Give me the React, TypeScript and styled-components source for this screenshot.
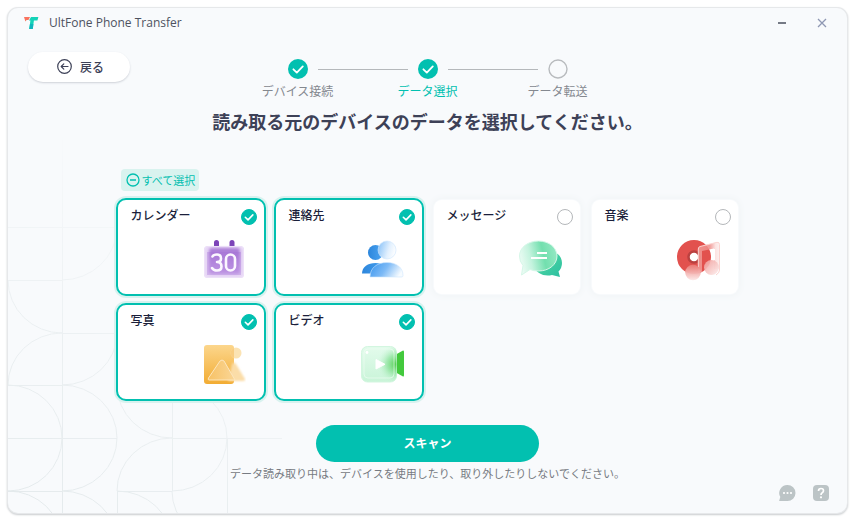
import React, { useState } from "react";
import styled, { createGlobalStyle } from "styled-components";

const teal = "#02c0b0";
const ink = "#3d4157";
const muted = "#84888f";

const GlobalStyle = createGlobalStyle`
  * { box-sizing: border-box; }
  body {
    margin: 0;
    background: #fff;
    color: ${ink};
    font-family: "Noto Sans CJK JP", "Noto Sans", sans-serif;
    font-size: 12px;
  }
  button { font: inherit; color: inherit; border: 0; background: none; padding: 0; cursor: pointer; }
  svg { display: block; }
`;

const Page = styled.div`
  padding: 8px 8px 7px;
`;

const Window = styled.div`
  position: relative;
  display: flex;
  flex-direction: column;
  min-height: calc(100vh - 15px);
  border-radius: 10px;
  background: #f8fafc;
  box-shadow: 0 0 0 1px #e6e8ea, 0 1px 2px 1px #c9cccf;
  overflow: hidden;
`;

const Backdrop = styled.svg`
  position: absolute;
  left: 0;
  bottom: 0;
  pointer-events: none;
`;

const TitleBar = styled.header`
  position: relative;
  display: flex;
  align-items: center;
  height: 30px;
  padding: 0 19px 0 16px;
`;

const AppName = styled.span`
  margin-left: 10px;
  flex: 1;
  font-family: "Open Sans", "Noto Sans", sans-serif;
  font-size: 12px;
  line-height: 16px;
  color: #4d5260;
`;

const WindowControls = styled.div`
  display: flex;
  gap: 28px;
`;

const Main = styled.main`
  position: relative;
  display: flex;
  flex-direction: column;
  align-items: center;
  padding: 14px 20px 0;
`;

const TopRow = styled.div`
  display: grid;
  grid-template-columns: 1fr auto 1fr;
  align-items: start;
  width: 100%;
`;

const BackButton = styled.button`
  display: flex;
  align-items: center;
  justify-self: start;
  gap: 8px;
  width: 102px;
  height: 30px;
  padding: 0 0 2px 29px;
  border-radius: 15px;
  background: #fff;
  box-shadow: 0 1px 2px rgba(60, 70, 90, 0.22);
  font-weight: 500;
`;

const Steps = styled.ol`
  display: flex;
  margin: 7px 0 0;
  padding: 0;
  list-style: none;
`;

const StepItem = styled.li<{ $current?: boolean }>`
  width: 130px;
  font-size: 12px;
  line-height: 16px;
  text-align: center;
  color: ${(p) => (p.$current ? teal : muted)};
`;

const StepTrack = styled.div`
  display: flex;
  align-items: center;
  gap: 10px;
  margin-bottom: 4px;
`;

const Connector = styled.span<{ $hidden?: boolean }>`
  flex: 1;
  height: 1px;
  background: ${(p) => (p.$hidden ? "transparent" : "#b5b8bb")};
`;

const Heading = styled.h1`
  margin: 9px 0 0;
  font-size: 18px;
  line-height: 26px;
  font-weight: 700;
  color: ${ink};
`;

const Picker = styled.section`
  width: 100%;
  max-width: 624px;
  margin-top: 35px;
`;

const SelectAll = styled.button`
  display: flex;
  align-items: center;
  gap: 2px;
  height: 22px;
  margin: 0 0 7px 5px;
  padding: 0 4px 0 5px;
  border-radius: 4px;
  background: #d9f3ef;
  color: ${teal};
  font-size: 11px;
`;

const CardGrid = styled.div`
  display: grid;
  grid-template-columns: repeat(4, minmax(0, 1fr));
  gap: 7px 8px;
`;

const Card = styled.label<{ $selected: boolean }>`
  display: flex;
  flex-direction: column;
  justify-content: space-between;
  height: 98px;
  padding: 9px 7px 11px 13px;
  border: 2px solid ${(p) => (p.$selected ? teal : "transparent")};
  border-radius: 10px;
  background: #fff;
  background-clip: ${(p) => (p.$selected ? "border-box" : "padding-box")};
  box-shadow: ${(p) => (p.$selected ? "0 0 0 2px #d8f2ef" : "0 0 6px #f0f4f6")};
  cursor: pointer;
`;

const CardTop = styled.div`
  display: flex;
  justify-content: space-between;
  align-items: flex-start;
`;

const CardTitle = styled.span`
  font-size: 12px;
  line-height: 12px;
  font-weight: 500;
  color: #1b1f3b;
`;

const CardArt = styled.svg`
  align-self: flex-end;
  margin-right: 11px;
`;

const CheckStack = styled.span`
  display: grid;
  place-items: center;
  > * { grid-area: 1 / 1; }
`;

const CheckInput = styled.input`
  appearance: none;
  width: 16px;
  height: 16px;
  margin: 0;
  border: 1px solid #b4b7ba;
  border-radius: 50%;
  background: #fff;
  cursor: pointer;
  &:checked { border-color: ${teal}; background: ${teal}; }
`;

const CheckMark = styled.svg`
  pointer-events: none;
`;

const ScanButton = styled.button`
  width: 223px;
  height: 37px;
  margin-top: 24px;
  padding-bottom: 2px;
  border-radius: 19px;
  background: ${teal};
  color: #fff;
  font-size: 12px;
  font-weight: 700;
`;

const Notice = styled.p`
  margin: 2px 0 0;
  font-size: 11px;
  line-height: 18px;
  color: #777b82;
`;

const Tools = styled.footer`
  position: relative;
  display: flex;
  justify-content: flex-end;
  gap: 16px;
  margin-top: auto;
  padding: 0 17px 11px;
`;

const Logo = () => (
  <svg width="15" height="14" viewBox="0 0 15 14" aria-hidden="true">
    <path d="M0 1h6L4.500 4H2.600L1.400 5.400Z" fill="#f8735f" />
    <path d="M7 1h7.400l-1 3.400H9.900L8.800 13H5.200L6.400 4.400H5Z" fill="#14d3b8" />
    <path d="M6 8h3.400l-.7 5H5.200Z" fill="#0fb6bd" />
  </svg>
);

const Tick = ({ size }: { size: number }) => (
  <CheckMark width={size} height={size} viewBox="0 0 20 20" fill="none" aria-hidden="true">
    <path d="M5.400 10.300 8.800 13.600 14.800 7.400" stroke="#fff" strokeWidth="2" strokeLinecap="round" strokeLinejoin="round" />
  </CheckMark>
);

const StepDot = ({ done }: { done: boolean }) => (
  <svg width="20" height="20" viewBox="0 0 20 20" fill="none" aria-hidden="true">
    {done ? (
      <>
        <circle cx="10" cy="10" r="10" fill={teal} />
        <path d="M5.400 10.300 8.800 13.600 14.800 7.400" stroke="#fff" strokeWidth="1.800" strokeLinecap="round" strokeLinejoin="round" />
      </>
    ) : (
      <circle cx="10" cy="10" r="9" stroke="#b8bbbe" strokeWidth="1.400" />
    )}
  </svg>
);

const CalendarArt = () => (
  <>
    <defs>
      <linearGradient id="calBody" x1="0" y1="0" x2="0" y2="1">
        <stop offset="0" stopColor="#a878d6" />
        <stop offset="1" stopColor="#ccaaeb" />
      </linearGradient>
      <filter id="calSoft" x="-20%" y="-20%" width="140%" height="140%"><feGaussianBlur stdDeviation="1.8" /></filter>
    </defs>
    <rect x="12" y="1" width="5" height="10" rx="2.500" fill="#7c43b8" />
    <rect x="27.500" y="1" width="5" height="10" rx="2.500" fill="#7c43b8" />
    <rect x="2" y="7" width="40" height="32" rx="3.500" fill="#e8d8f6" />
    <rect x="7" y="9" width="31" height="26" rx="3" fill="url(#calBody)" filter="url(#calSoft)" />
    <rect x="5" y="13" width="34" height="23" fill="#9a62cf" opacity=".3" />
    <rect x="2.500" y="7.500" width="39" height="31" rx="3.500" fill="none" stroke="#f0e5fa" opacity=".7" />
    <g stroke="#fbf7ff" strokeWidth="2.600" fill="none" strokeLinecap="round" strokeLinejoin="round">
      <path d="M10.500 17.500Q11.500 15.500 15 15.500Q19 15.500 19 19.500Q19 23 15 23Q19.500 23 19.500 27.500Q19.500 31.500 15 31.500Q11.500 31.500 10 29" />
      <rect x="24" y="15.500" width="9" height="16" rx="4.500" />
    </g>
  </>
);

const ContactsArt = () => (
  <>
    <defs>
      <linearGradient id="conBack" x1="0" y1="0" x2="1" y2="0">
        <stop offset="0" stopColor="#2c86dc" />
        <stop offset="1" stopColor="#4da5f2" />
      </linearGradient>
      <linearGradient id="conHead" x1="0" y1=".3" x2="1" y2=".6">
        <stop offset="0" stopColor="#8fc5f8" />
        <stop offset=".6" stopColor="#e2f0fe" />
        <stop offset="1" stopColor="#fff" />
      </linearGradient>
      <linearGradient id="conBody" x1="0" y1=".2" x2="1" y2=".5">
        <stop offset="0" stopColor="#3f98ee" />
        <stop offset=".5" stopColor="#7dbaf6" />
        <stop offset="1" stopColor="#f6fbff" />
      </linearGradient>
    </defs>
    <circle cx="15.500" cy="13.500" r="7.500" fill="url(#conBack)" />
    <path d="M2 34.500C2 28 8 24 15.500 24S28 28 28 34.500Z" fill="url(#conBack)" />
    <circle cx="27" cy="11" r="9" fill="url(#conHead)" stroke="#cfe6fd" strokeWidth=".6" />
    <path d="M10 38C10 29 17 23.500 27 23.500S43 29 43 36.500Q43 38 41.500 38Z" fill="url(#conBody)" stroke="#cfe6fd" strokeWidth=".6" />
  </>
);

const MessageArt = () => (
  <>
    <defs>
      <linearGradient id="msgBack" x1="0" y1="0" x2="1" y2="1">
        <stop offset="0" stopColor="#54dca0" />
        <stop offset="1" stopColor="#2dbfa2" />
      </linearGradient>
      <linearGradient id="msgFront" x1="0" y1=".6" x2="1" y2=".4">
        <stop offset="0" stopColor="#edfcf5" />
        <stop offset=".3" stopColor="#c4f3de" />
        <stop offset=".65" stopColor="#72dfae" />
        <stop offset="1" stopColor="#93e8c3" />
      </linearGradient>
    </defs>
    <path d="M38 14C42 16 44 20 44 24Q44 29 40.500 32.500L42 38 34 36C26 38 18 34 16 28Z" fill="url(#msgBack)" />
    <path d="M20.500 2C31 2 39 8.500 39 17S31 32 20.500 32Q15.500 32 12 30.500L3.500 36 5 26.500Q1.500 22.500 1.500 17C1.500 8.500 10 2 20.500 2Z" fill="url(#msgFront)" stroke="#d6f7e8" strokeWidth="1" />
    <path d="M19 14h10M13 19h16" stroke="#fff" strokeWidth="2.200" />
  </>
);

const MusicArt = () => (
  <>
    <defs>
      <linearGradient id="musNote" gradientUnits="userSpaceOnUse" x1="21" y1="0" x2="44" y2="0">
        <stop offset="0" stopColor="#f2a09c" />
        <stop offset=".55" stopColor="#ee8b87" />
        <stop offset=".8" stopColor="#fbdedc" />
        <stop offset="1" stopColor="#fdf0ef" />
      </linearGradient>
      <linearGradient id="musDot" x1="0" y1="0" x2="0" y2="1">
        <stop offset="0" stopColor="#ea7a76" />
        <stop offset="1" stopColor="#fce9e8" />
      </linearGradient>
      <linearGradient id="musDotRight" x1="0" y1="0" x2="1" y2="1">
        <stop offset="0" stopColor="#f09a97" />
        <stop offset="1" stopColor="#fdf0ef" />
      </linearGradient>
    </defs>
    <circle cx="18" cy="18" r="11" fill="none" stroke="#e2514e" strokeWidth="12" />
    <circle cx="18" cy="18" r="5.500" fill="none" stroke="#bb4140" strokeWidth="2.500" />
    <path d="M22 33V10Q22 8 24 7.500L41 3.300Q43.500 3 43.500 5.500V30H38V9.500L26 12V33Z" fill="url(#musNote)" opacity=".85" />
    <path d="M22.300 28V10Q22.300 8 24 7.500L41 3.300Q43.500 3 43.500 5.500V31Q43.500 34 40 36" fill="none" stroke="#fbd3d0" strokeWidth="1" />
    <rect x="35.500" y="10" width="3.500" height="11" fill="#fff" />
    <circle cx="17" cy="33.500" r="7.800" fill="url(#musDot)" opacity=".95" />
    <circle cx="35.500" cy="28.500" r="7.500" fill="url(#musDotRight)" opacity=".9" />
  </>
);

const PhotoArt = () => (
  <>
    <defs>
      <linearGradient id="phoBody" x1="0" y1="0" x2="0" y2="1">
        <stop offset="0" stopColor="#fcd68c" />
        <stop offset="1" stopColor="#f2ac33" />
      </linearGradient>
      <linearGradient id="phoHill" x1="0" y1="0" x2="1" y2="0">
        <stop offset="0" stopColor="#f7c266" />
        <stop offset="1" stopColor="#fad696" />
      </linearGradient>
      <filter id="phoSoft" x="-20%" y="-20%" width="140%" height="140%"><feGaussianBlur stdDeviation=".8" /></filter>
    </defs>
    <rect x="2" y="1" width="30" height="39" rx="3" fill="url(#phoBody)" />
    <circle cx="34" cy="9" r="5.500" fill="#fbe0ab" opacity=".9" />
    <path d="M28.500 9a5.500 5.500 0 0 0 3.500 5V4Q28.500 6 28.500 9Z" fill="#f9cd80" />
    <path d="M30 20Q32 17 34 20L43 35Q43.500 37 41.500 37H26Z" fill="#fbdda8" filter="url(#phoSoft)" />
    <path d="M18 17Q20 15 22 17L33 36H7Q5.500 36 6.500 34Z" fill="url(#phoHill)" stroke="#fde6bd" strokeWidth="1" />
  </>
);

const VideoArt = () => (
  <>
    <defs>
      <linearGradient id="vidBody" x1="0" y1="0" x2="0" y2="1">
        <stop offset="0" stopColor="#e3fbec" />
        <stop offset="1" stopColor="#c9f4d8" />
      </linearGradient>
      <radialGradient id="vidGlow" cx="1" cy=".5" r=".55">
        <stop offset="0" stopColor="#4bcd49" />
        <stop offset=".5" stopColor="#8be29a" stopOpacity=".7" />
        <stop offset="1" stopColor="#c9f5d8" stopOpacity="0" />
      </radialGradient>
    </defs>
    <path d="M35 11 43 6.500Q44 6 44 8V31Q44 33 43 32.500L35 28Z" fill="#43c93d" />
    <rect x="1.500" y="2.500" width="35" height="35.500" rx="6" fill="url(#vidBody)" stroke="#d3f6e0" />
    <rect x="1.500" y="2.500" width="35" height="35.500" rx="6" fill="url(#vidGlow)" />
    <rect x="4" y="5" width="30" height="29" rx="4" fill="none" stroke="#f1fdf5" opacity=".6" />
    <path d="M16 15.500v9.500l9-4.700Z" fill="#fff" stroke="#fff" strokeLinejoin="round" />
    <circle cx="7" cy="8.500" r="1.400" fill="#fff" />
  </>
);

const kinds = [
  { id: "calendar", title: "カレンダー", Art: CalendarArt },
  { id: "contacts", title: "連絡先", Art: ContactsArt },
  { id: "messages", title: "メッセージ", Art: MessageArt },
  { id: "music", title: "音楽", Art: MusicArt },
  { id: "photos", title: "写真", Art: PhotoArt },
  { id: "videos", title: "ビデオ", Art: VideoArt },
];

const steps = [
  { title: "デバイス接続", done: true, current: false },
  { title: "データ選択", done: true, current: true },
  { title: "データ転送", done: false, current: false },
];

const Pattern = () => (
  <Backdrop width="400" height="505" viewBox="8 8 400 505" fill="none" aria-hidden="true">
    <defs>
      <linearGradient id="fade" gradientUnits="userSpaceOnUse" x1="20" y1="500" x2="200" y2="220">
        <stop offset="0" stopColor="#fff" />
        <stop offset=".5" stopColor="#fff" stopOpacity=".6" />
        <stop offset="1" stopColor="#fff" stopOpacity="0" />
      </linearGradient>
      <mask id="fadeMask" maskUnits="userSpaceOnUse" x="8" y="8" width="400" height="505">
        <rect x="8" y="8" width="400" height="505" fill="url(#fade)" />
      </mask>
    </defs>
    <g stroke="#e4eaec" mask="url(#fadeMask)">
      <path d="M62.500 120V513M117.500 491V513M172.500 385V491M227.500 438V513" />
      <path d="M8 227.500H117M8 280.500H62M62 333.500H117M8 385.500H62M8 438.500H117M8 491.500H62M172 438.500H282M117 491.500H172" />
      <path d="M62 280A55 53 0 0 0 117 228M8 280A54 53 0 0 0 62 333A54 52 0 0 0 8 385M62 385A55 52 0 0 0 117 333" />
      <path d="M8 385A54 53 0 0 1 62 438A54 53 0 0 1 8 491A54 52 0 0 1 62 543M62 385A55 53 0 0 1 117 438A55 53 0 0 1 62 491A55 52 0 0 1 117 543" />
      <path d="M117 385A55 53 0 0 0 172 438A55 53 0 0 0 117 491A55 52 0 0 1 172 543M172 385A55 53 0 0 1 227 438A55 53 0 0 1 172 491A55 52 0 0 0 227 543" />
    </g>
  </Backdrop>
);

export default function App() {
  const [selected, setSelected] = useState<string[]>(["calendar", "contacts", "photos", "videos"]);
  const toggle = (id: string) =>
    setSelected((now) => (now.includes(id) ? now.filter((k) => k !== id) : [...now, id]));
  const toggleAll = () => setSelected((now) => (now.length === kinds.length ? [] : kinds.map((k) => k.id)));

  return (
    <Page>
      <GlobalStyle />
      <Window>
        <Pattern />
        <TitleBar>
          <Logo />
          <AppName>UltFone Phone Transfer</AppName>
          <WindowControls>
            <button aria-label="最小化">
              <svg width="12" height="12" viewBox="0 0 12 12">
                <path d="M2 6h8" stroke="#4a4f5e" strokeWidth="1.500" />
              </svg>
            </button>
            <button aria-label="閉じる">
              <svg width="12" height="12" viewBox="0 0 12 12">
                <path d="M2 2l8 8M10 2l-8 8" stroke="#8f98b3" strokeWidth="1.300" />
              </svg>
            </button>
          </WindowControls>
        </TitleBar>

        <Main>
          <TopRow>
            <BackButton>
              <svg width="15" height="15" viewBox="0 0 15 15" fill="none" stroke={ink} aria-hidden="true">
                <circle cx="7.500" cy="7.500" r="6.800" strokeWidth="1.200" />
                <path d="M11 7.500H4.200M6.800 4.900 4.200 7.500l2.600 2.600" strokeWidth="1.200" strokeLinecap="round" strokeLinejoin="round" />
              </svg>
              戻る
            </BackButton>
            <Steps>
              {steps.map((step, i) => (
                <StepItem key={step.title} $current={step.current} aria-current={step.current ? "step" : undefined}>
                  <StepTrack>
                    <Connector $hidden={i === 0} />
                    <StepDot done={step.done} />
                    <Connector $hidden={i === steps.length - 1} />
                  </StepTrack>
                  {step.title}
                </StepItem>
              ))}
            </Steps>
          </TopRow>

          <Heading>読み取る元のデバイスのデータを選択してください。</Heading>

          <Picker>
            <SelectAll onClick={toggleAll}>
              <svg width="14" height="14" viewBox="0 0 14 14" fill="none" stroke={teal} strokeWidth="1.300" aria-hidden="true">
                <circle cx="7" cy="7" r="6" />
                <path d="M4 7h6" />
              </svg>
              すべて選択
            </SelectAll>
            <CardGrid>
              {kinds.map(({ id, title, Art }) => {
                const on = selected.includes(id);
                return (
                  <Card key={id} $selected={on}>
                    <CardTop>
                      <CardTitle>{title}</CardTitle>
                      <CheckStack>
                        <CheckInput type="checkbox" checked={on} onChange={() => toggle(id)} />
                        {on && <Tick size={16} />}
                      </CheckStack>
                    </CardTop>
                    <CardArt width="44" height="44" viewBox="0 0 44 44" fill="none" aria-hidden="true">
                      <Art />
                    </CardArt>
                  </Card>
                );
              })}
            </CardGrid>
          </Picker>

          <ScanButton>スキャン</ScanButton>
          <Notice>データ読み取り中は、デバイスを使用したり、取り外したりしないでください。</Notice>
        </Main>

        <Tools>
          <button aria-label="フィードバック">
            <svg width="18" height="18" viewBox="0 0 18 18">
              <path d="M9.500 1A8 8 0 1 1 9.500 17H1.500Q1 17 1.300 16.300L2.300 13A8 8 0 0 1 9.500 1Z" fill="#bcc4c6" />
              <g fill="#fff"><circle cx="6" cy="9" r="1.100" /><circle cx="9.500" cy="9" r="1.100" /><circle cx="13" cy="9" r="1.100" /></g>
            </svg>
          </button>
          <button aria-label="ヘルプ">
            <svg width="18" height="18" viewBox="0 0 18 18" fill="none">
              <rect x="1" y="1" width="16" height="16" rx="4" fill="#bcc4c6" />
              <path d="M6.500 7Q6.500 4.500 9 4.500T11.500 6.800Q11.500 8 10.200 8.800Q9 9.500 9 11" stroke="#fff" strokeWidth="1.700" />
              <circle cx="9" cy="13.300" r="1.100" fill="#fff" />
            </svg>
          </button>
        </Tools>
      </Window>
    </Page>
  );
}
